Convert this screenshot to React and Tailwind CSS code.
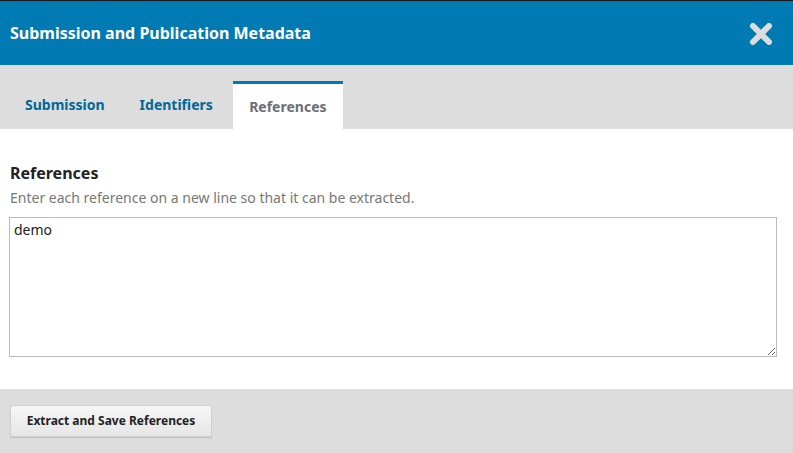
export default function App() {
  return (
    <div className="w-[793px] h-[453px] overflow-hidden bg-white flex flex-col" style={{ fontFamily: '"Noto Sans", sans-serif' }}>
      <div className="h-[65px] shrink-0 bg-[#007ab2] border-t border-[#1a1a1a] flex items-center justify-between pl-[10px] pr-[20px]">
        <h1 className="text-white font-bold text-[16px] leading-none">Submission and Publication Metadata</h1>
        <svg width="24" height="22" viewBox="0 0 24 22" className="mt-[2px]">
          <path d="M4 3 L20 19 M20 3 L4 19" stroke="#dddddd" strokeWidth="6" strokeLinecap="round" />
        </svg>
      </div>
      <div className="h-[64px] shrink-0 bg-[#dddddd] flex items-end pl-[8px]">
        <div className="h-[48px] flex items-center px-[17px] text-[14px] font-bold text-[#006798] pb-[1px]">Submission</div>
        <div className="h-[48px] flex items-center px-[18px] text-[14px] font-bold text-[#006798] pb-[1px]">Identifiers</div>
        <div className="h-[48px] w-[110px] ml-[2px] flex items-center justify-center bg-white border-t-[3px] border-[#007ab2] text-[14px] font-bold text-[#6a6f73] pb-[1px]">References</div>
      </div>
      <div className="flex-1 bg-white pl-[9px] pr-[16px] pt-[34px]">
        <div className="pl-[1px] text-[16px] font-bold text-[#222] leading-[20px]">References</div>
        <div className="pl-[1px] text-[14px] text-[#777] leading-[20px] mt-[5px]">Enter each reference on a new line so that it can be extracted.</div>
        <textarea
          defaultValue="demo"
          className="mt-[9px] block w-[768px] h-[140px] border border-[#bbbbbb] px-[4px] py-[2px] text-[14px] text-[#222] leading-[20px] outline-none resize-y"
          style={{ fontFamily: '"Noto Sans", sans-serif' }}
        />
      </div>
      <div className="h-[64px] shrink-0 bg-[#dddddd] flex items-center pl-[10px]">
        <button className="h-[32px] w-[202px] rounded-[2px] border border-[#d0d0d0] bg-gradient-to-b from-[#f6f6f6] to-[#e6e6e6] shadow-[0_1px_1px_rgba(0,0,0,0.15)] text-[12px] font-bold text-[#222]">Extract and Save References</button>
      </div>
    </div>
  );
}
